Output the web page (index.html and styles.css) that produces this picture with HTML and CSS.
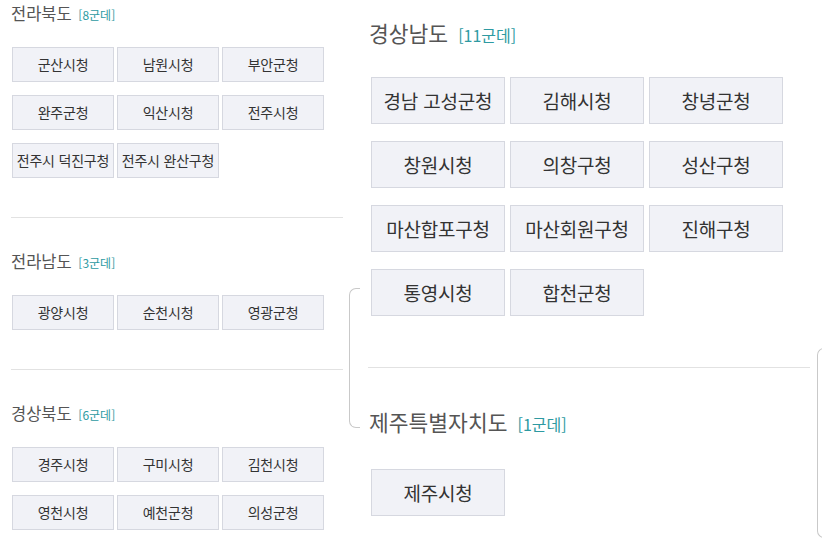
FILE: index.html
```html
<!DOCTYPE html>
<html lang="ko">
<head>
<meta charset="utf-8">
<title>관공서 목록</title>
<link rel="stylesheet" href="styles.css">
</head>
<body>
<div class="page">
  <div class="panel-left">
    <section class="sec">
      <h2 class="title">전라북도 <span class="count">[8군데]</span></h2>
      <div class="grid">
        <a class="btn">군산시청</a><a class="btn">남원시청</a><a class="btn">부안군청</a>
        <a class="btn">완주군청</a><a class="btn">익산시청</a><a class="btn">전주시청</a>
        <a class="btn">전주시 덕진구청</a><a class="btn">전주시 완산구청</a>
      </div>
    </section>
    <hr class="divider">
    <section class="sec">
      <h2 class="title">전라남도 <span class="count">[3군데]</span></h2>
      <div class="grid">
        <a class="btn">광양시청</a><a class="btn">순천시청</a><a class="btn">영광군청</a>
      </div>
    </section>
    <hr class="divider">
    <section class="sec">
      <h2 class="title">경상북도 <span class="count">[6군데]</span></h2>
      <div class="grid">
        <a class="btn">경주시청</a><a class="btn">구미시청</a><a class="btn">김천시청</a>
        <a class="btn">영천시청</a><a class="btn">예천군청</a><a class="btn">의성군청</a>
      </div>
    </section>
  </div>
  <div class="panel-right">
    <span class="bracket bracket-a"></span>
    <span class="bracket bracket-b"></span>
    <section class="sec">
      <h2 class="title">경상남도 <span class="count">[11군데]</span></h2>
      <div class="grid">
        <a class="btn">경남 고성군청</a><a class="btn">김해시청</a><a class="btn">창녕군청</a>
        <a class="btn">창원시청</a><a class="btn">의창구청</a><a class="btn">성산구청</a>
        <a class="btn">마산합포구청</a><a class="btn">마산회원구청</a><a class="btn">진해구청</a>
        <a class="btn">통영시청</a><a class="btn">합천군청</a>
      </div>
    </section>
    <hr class="divider">
    <section class="sec sec-last">
      <h2 class="title">제주특별자치도 <span class="count">[1군데]</span></h2>
      <div class="grid">
        <a class="btn">제주시청</a>
      </div>
    </section>
  </div>
</div>
</body>
</html>
```

FILE: styles.css
```css
html, body {
  margin: 0;
  padding: 0;
  background: #ffffff;
  overflow: hidden;
}
body {
  font-family: "Noto Sans CJK KR", "Noto Sans", sans-serif;
  color: #333;
}
.page {
  display: flex;
  width: 822px;
  height: 540px;
}
.title {
  margin: 0;
  font-weight: 400;
  color: #555;
  white-space: nowrap;
  overflow: visible;
}
.count {
  color: #2e9aa2;
}
.btn {
  display: block;
  box-sizing: border-box;
  background: #f1f2f7;
  border: 1px solid #d6d8e0;
  color: #333;
  text-align: center;
  white-space: nowrap;
  overflow: hidden;
}
.divider {
  border: 0;
  height: 1px;
  background: #e2e2e2;
  margin: 0;
}

/* left panel (small scale) */
.panel-left {
  width: 345px;
  flex: none;
  box-sizing: border-box;
  padding: 3px 0 0 11px;
}
.panel-left .title {
  font-size: 16.5px;
  line-height: 20px;
  height: 20px;
  margin-bottom: 24px;
}
.panel-left .count {
  font-size: 12px;
  margin-left: 2px;
}
.panel-left .grid {
  display: grid;
  grid-template-columns: repeat(3, 102px);
  column-gap: 3px;
  row-gap: 13px;
  padding-left: 1px;
}
.panel-left .btn {
  height: 35px;
  line-height: 33px;
  font-size: 14px;
  letter-spacing: -0.2px;
}
.panel-left .divider {
  width: 332px;
  margin: 39px 0 33px;
}

/* right panel (large scale) */
.panel-right {
  position: relative;
  width: 477px;
  flex: none;
  box-sizing: border-box;
  padding: 20px 0 0 24px;
}
.panel-right .title {
  font-size: 21.5px;
  line-height: 26px;
  height: 26px;
  margin-bottom: 31px;
}
.panel-right .sec-last .title {
  margin-bottom: 34px;
}
.panel-right .count {
  font-size: 16px;
  margin-left: 4px;
}
.panel-right .grid {
  display: grid;
  grid-template-columns: repeat(3, 134px);
  column-gap: 5px;
  row-gap: 17px;
  padding-left: 2px;
}
.panel-right .btn {
  height: 47px;
  line-height: 45px;
  font-size: 19px;
  letter-spacing: -0.2px;
}
.panel-right .divider {
  width: 442px;
  margin: 51px 0 41px -1px;
}

/* decorative brackets */
.bracket {
  position: absolute;
  width: 10px;
  border: 1px solid #c9c9c9;
  border-right: 0;
  border-radius: 7px 0 0 7px;
}
.bracket-a {
  left: 4px;
  top: 288px;
  height: 138px;
}
.bracket-b {
  left: 472px;
  top: 348px;
  height: 188px;
}
```
